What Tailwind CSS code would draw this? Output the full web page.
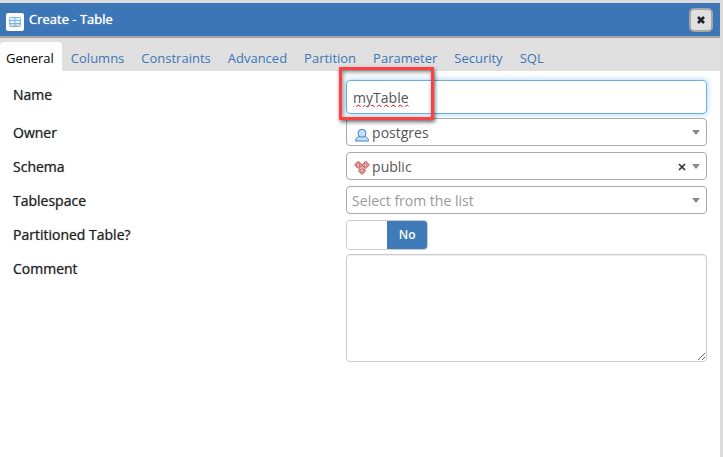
<!DOCTYPE html>
<html lang="en">
  <head>
    <meta charset="utf-8" />
    <meta name="viewport" content="width=device-width, initial-scale=1.0" />
    <title>Create - Table</title>
    <script src="https://cdn.jsdelivr.net/npm/@tailwindcss/browser@4"></script>
  </head>
  <body class="bg-[#dcdcdc] font-['Open_Sans',sans-serif] text-[#222]">
    <div class="mt-[3px] mr-[3px] min-h-[calc(100vh-3px)] bg-white">
      <!-- Title bar -->
      <header
        class="flex h-[35px] items-center border-b-2 border-[#a6a6a6] bg-[#3c76b6] pr-[7px] pl-1.5"
      >
        <svg class="mt-1 h-[18px] w-[18px]" viewBox="0 0 18 18">
          <rect width="18" height="18" rx="2" fill="#fff" />
          <rect x="3.5" y="4.5" width="11" height="9" rx="1" fill="#eaf4fd" stroke="#72b4ed" />
          <path d="M4 10h10v3h-10z" fill="#d5d8dc" />
          <path d="M3.5 7.500h11M3.5 10.500h11M9 4.500v9" fill="none" stroke="#72b4ed" />
        </svg>
        <h1 class="ml-[5px] text-[13px] font-medium text-white [text-shadow:0_0_1px_#fff]">Create - Table</h1>
        <button
          type="button"
          aria-label="Close"
          class="ml-auto flex h-6 w-6 items-center justify-center rounded-[5px] border-2 border-[#a6a6a6] bg-[#e0e0e0]"
        >
          <svg class="h-2 w-2" viewBox="0 0 8 8">
            <path d="M1 1l6 6M7 1l-6 6" stroke="#222" stroke-width="2.6" />
          </svg>
        </button>
      </header>

      <!-- Tabs -->
      <nav class="flex h-[33px] items-end gap-px bg-[#e0e0e0] text-[13px] text-[#3c76b6]">
        <a href="#general" class="h-[29px] rounded-t-[4px] bg-white pr-2 pl-1.5 leading-[33px] text-black">General</a>
        <a href="#columns" class="h-[29px] px-2 leading-[33px]">Columns</a>
        <a href="#constraints" class="h-[29px] px-2 leading-[33px]">Constraints</a>
        <a href="#advanced" class="h-[29px] px-2 leading-[33px]">Advanced</a>
        <a href="#partition" class="h-[29px] px-2 leading-[33px]">Partition</a>
        <a href="#parameter" class="h-[29px] px-2 leading-[33px]">Parameter</a>
        <a href="#security" class="h-[29px] px-2 leading-[33px]">Security</a>
        <a href="#sql" class="h-[29px] px-2 leading-[33px]">SQL</a>
      </nav>

      <!-- General -->
      <form class="flex flex-col gap-1.5 px-[13px] pt-[9px] text-[14px]">
        <div class="-mb-[2px] grid grid-cols-[12fr_13fr]">
          <label for="name" class="pt-1 font-medium [text-shadow:0_0_1px_#2229]">Name</label>
          <div class="relative z-10">
            <input
              id="name"
              type="text"
              value="myTable"
              spellcheck="false"
              class="block h-[34px] w-full rounded-[4px] border border-[#66afe9] px-1.5 text-[#555] underline decoration-[#e00] decoration-wavy decoration-1 shadow-[0_0_6px_#66afe999] outline-none"
            />
            <div
              class="pointer-events-none absolute -top-[13px] -left-[7px] h-[53px] w-[95px] border-3 border-[#fb4141] shadow-[1px_2px_4px_#0009,inset_1px_2px_4px_#0007]"
            ></div>
          </div>
        </div>

        <div class="grid grid-cols-[12fr_13fr]">
          <label for="owner" class="pt-1 font-medium [text-shadow:0_0_1px_#2229]">Owner</label>
          <div class="relative">
            <select id="owner" class="block h-7 w-full appearance-none rounded-[4px] border border-[#aaa] bg-white pl-[25px] text-[#555]">
              <option>postgres</option>
            </select>
            <svg class="pointer-events-none absolute top-[9px] left-2 h-4 w-4" viewBox="0 0 16 16" fill="#c5e1fa" stroke="#4a80cf">
              <path d="M1.500 14c0-2.500 1.500-4 4-4.500h5c2.500.5 4 2 4 4.500z" />
              <circle cx="8" cy="6.300" r="4" />
            </svg>
            <svg class="pointer-events-none absolute top-3 right-[7px] h-[5px] w-2" viewBox="0 0 8 5"><path d="M0 0h8L4 5z" fill="#888" /></svg>
          </div>
        </div>

        <div class="grid grid-cols-[12fr_13fr]">
          <label for="schema" class="pt-1 font-medium [text-shadow:0_0_1px_#2229]">Schema</label>
          <div class="relative">
            <select id="schema" class="block h-7 w-full appearance-none rounded-[4px] border border-[#aaa] bg-white pl-[25px] text-[#555]">
              <option>public</option>
            </select>
            <svg class="pointer-events-none absolute top-2 left-2 h-4 w-4" viewBox="0 0 16 16">
              <path d="M4.300 1.200l3.700 3.700-3.700 3.700-3.700-3.700zM11.700 1.200l3.700 3.700-3.700 3.700-3.700-3.700zM8 7l3.700 3.700-3.700 3.700-3.700-3.700z" fill="#e9aaaa" stroke="#c4555a" />
              <path d="M4.300 8.500l3.700-3.700 3.700 3.700-3.700 2z" fill="#e9aaaa" />
              <path d="M2.400 3l3.800 3.800M6.200 3l-3.800 3.800M9.800 3l3.800 3.800M13.600 3l-3.800 3.800M6.100 8.800l3.800 3.800M9.900 8.800l-3.800 3.800M5 8.200l3-3 3 3" fill="none" stroke="#c4555a" stroke-width=".8" />
              <g fill="#fff" stroke="#c4555a" stroke-width=".8">
                <circle cx="4.300" cy="4.900" r="1.300" />
                <circle cx="11.700" cy="4.900" r="1.300" />
                <circle cx="8" cy="10.700" r="1.300" />
              </g>
            </svg>
            <button type="button" aria-label="Clear schema" class="absolute top-[11px] right-[21px] h-2 w-2">
              <svg class="h-2 w-2" viewBox="0 0 8 8"><path d="M1 1l6 6M7 1l-6 6" stroke="#333" stroke-width="1.700" /></svg>
            </button>
            <svg class="pointer-events-none absolute top-3 right-[7px] h-[5px] w-2" viewBox="0 0 8 5"><path d="M0 0h8L4 5z" fill="#888" /></svg>
          </div>
        </div>

        <div class="grid grid-cols-[12fr_13fr]">
          <label for="tablespace" class="pt-1 font-medium [text-shadow:0_0_1px_#2229]">Tablespace</label>
          <div class="relative">
            <select id="tablespace" class="block h-7 w-full appearance-none rounded-[4px] border border-[#aaa] bg-white pl-[5px] text-[#999]">
              <option>Select from the list</option>
            </select>
            <svg class="pointer-events-none absolute top-3 right-[7px] h-[5px] w-2" viewBox="0 0 8 5"><path d="M0 0h8L4 5z" fill="#888" /></svg>
          </div>
        </div>

        <div class="-mb-[2px] grid grid-cols-[12fr_13fr]">
          <label for="partitioned" class="pt-1 font-medium [text-shadow:0_0_1px_#2229]">Partitioned Table?</label>
          <div class="relative flex h-[30px] w-[82px] overflow-hidden rounded-[4px] border border-[#ccc]">
            <input id="partitioned" type="checkbox" class="absolute inset-0 h-full w-full opacity-0" />
            <span class="w-1/2 bg-white"></span>
            <span class="w-1/2 bg-[#3f7ab9] text-center text-[12px] leading-7 font-semibold text-white">No</span>
          </div>
        </div>

        <div class="grid grid-cols-[12fr_13fr]">
          <label for="comment" class="pt-1 font-medium [text-shadow:0_0_1px_#2229]">Comment</label>
          <textarea id="comment" class="block h-[108px] w-full rounded-[4px] border border-[#ccc] p-1.5 shadow-[inset_0_1px_1px_#00000013] outline-none"></textarea>
        </div>
      </form>
    </div>
  </body>
</html>
